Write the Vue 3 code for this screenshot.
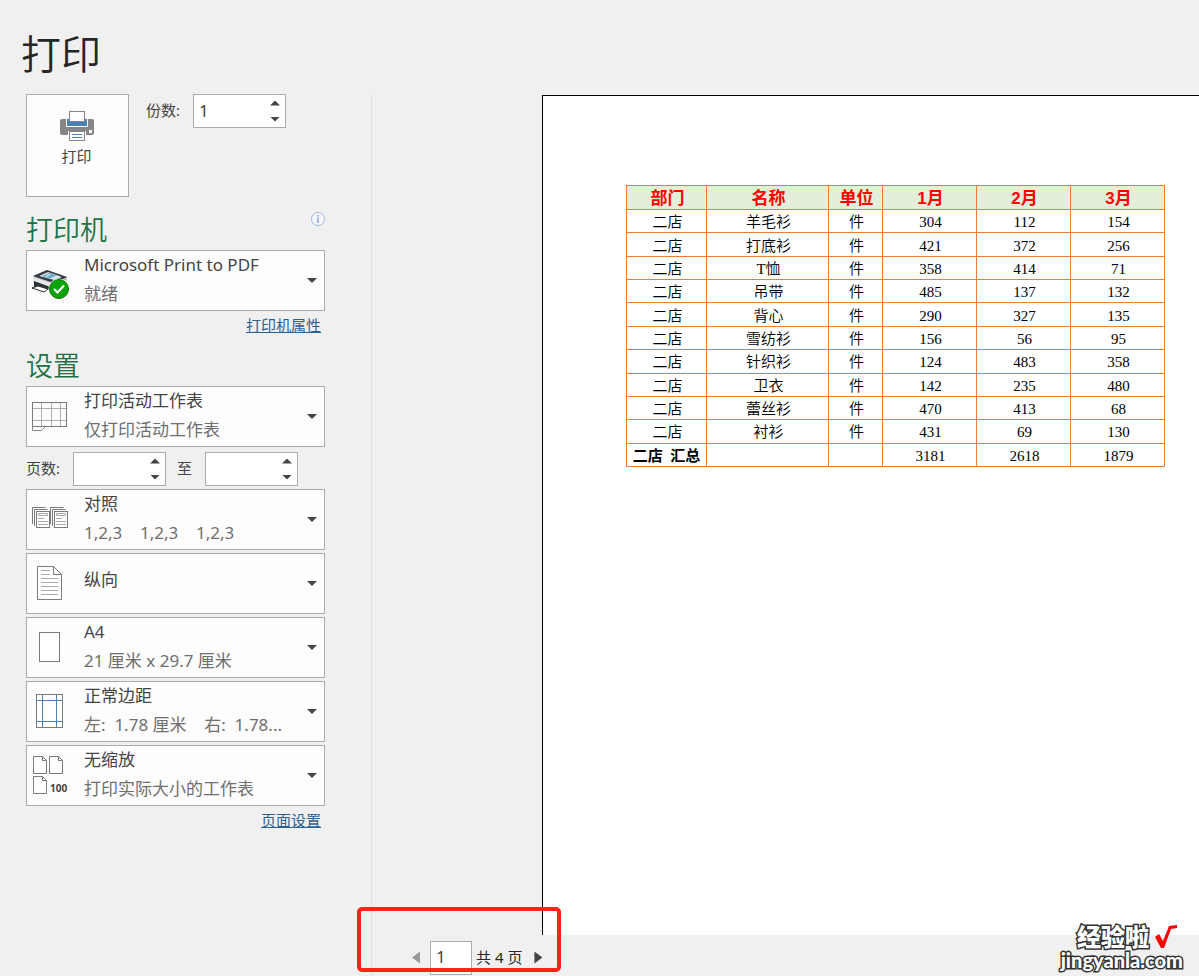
<script setup>
import { ref } from 'vue'

const copies = ref('1')
const fromPage = ref('')
const toPage = ref('')
const page = ref('1')

const step = (field, delta) => {
  field.value = String(Math.max(1, (parseInt(field.value, 10) || 0) + delta))
}
const stepCopies = (d) => step(copies, d)
const stepFrom = (d) => step(fromPage, d)
const stepTo = (d) => step(toPage, d)
const stepPage = (d) => step(page, d)

const settings = [
  { id: 'collate', label: '对照方式', title: '对照', note: '1,2,3    1,2,3    1,2,3' },
  { id: 'orientation', label: '纸张方向', title: '纵向', note: '' },
  { id: 'paper', label: '纸张大小', title: 'A4', note: '21 厘米 x 29.7 厘米' },
  { id: 'margins', label: '页边距', title: '正常边距', note: '左:  1.78 厘米    右:  1.78...' },
  { id: 'scale', label: '缩放', title: '无缩放', note: '打印实际大小的工作表' },
]

const columns = ['部门', '名称', '单位', '1月', '2月', '3月']
const rows = [
  ['二店', '羊毛衫', '件', 304, 112, 154],
  ['二店', '打底衫', '件', 421, 372, 256],
  ['二店', 'T恤', '件', 358, 414, 71],
  ['二店', '吊带', '件', 485, 137, 132],
  ['二店', '背心', '件', 290, 327, 135],
  ['二店', '雪纺衫', '件', 156, 56, 95],
  ['二店', '针织衫', '件', 124, 483, 358],
  ['二店', '卫衣', '件', 142, 235, 480],
  ['二店', '蕾丝衫', '件', 470, 413, 68],
  ['二店', '衬衫', '件', 431, 69, 130],
]
</script>

<template>
  <main class="backstage">
    <h1>打印</h1>
    <div class="content">
      <section class="options">
        <div class="print-row">
          <button class="print-button" type="button">
            <svg width="36" height="32" viewBox="0 0 36 32" aria-hidden="true">
              <rect x="1" y="9" width="34" height="16" rx="2" fill="#868686" />
              <path d="M7 9V17H29V9" fill="#fff" />
              <rect x="8" y="9" width="20" height="7" fill="#4a80b8" />
              <rect x="10.5" y="1.5" width="15" height="10" fill="#fff" stroke="#868686" />
              <rect x="30" y="20" width="3" height="3" fill="#fff" />
              <rect x="9" y="21" width="18" height="10" fill="#fdfdfd" />
              <rect x="10.5" y="21.5" width="15" height="9" fill="#fff" stroke="#868686" />
              <path d="M13 24.5H23M13 27.5H23" stroke="#4a80b8" />
            </svg>
            <span>打印</span>
          </button>
          <label class="caption" for="copies">份数:</label>
          <div class="spinner">
            <input id="copies" v-model="copies" type="text" inputmode="numeric" />
            <div class="steps">
              <button type="button" class="up" aria-label="增加份数" @click="stepCopies(1)"></button>
              <button type="button" class="down" aria-label="减少份数" @click="stepCopies(-1)"></button>
            </div>
          </div>
        </div>

        <div class="heading">
          <h2>打印机</h2>
          <button class="info" type="button" aria-label="打印机状态">
            <svg width="16" height="16" viewBox="0 0 16 16" aria-hidden="true">
              <circle cx="8" cy="8" r="6.5" fill="#f4f7fc" stroke="#9db8dc" />
              <path d="M8 4V5.500M8 6.500V12" stroke="#8fa9d0" stroke-width="1.600" />
            </svg>
          </button>
        </div>

        <div class="picker">
          <select id="printer" aria-label="打印机">
            <option>Microsoft Print to PDF</option>
          </select>
          <svg class="icon" width="46" height="59" viewBox="0 0 46 59" aria-hidden="true">
            <path d="M6 26L20 19L40 26L39 33L24 37L6 31Z" fill="#b8bcc1" />
            <path d="M6 25L20 19L40 26L27 32Z" fill="#33383e" />
            <path d="M12 25L21 21L35 26L27 29Z" fill="#dce4ea" />
            <path d="M15 25L22 22L29 24.500L23 27.500Z" fill="#63a6d4" />
            <path d="M18 25L22 23L24 24L20 26Z" fill="#b7e4c4" />
            <path d="M6 26L27 33V39L6 32Z" fill="#e5e7e9" />
            <path d="M7 30L26 37V40L11 35V38L7 36Z" fill="#2d3034" />
            <path d="M11 35L21 38L17 41L5 37Z" fill="#fff" stroke="#303338" />
            <circle cx="32" cy="38" r="10.500" fill="#fff" />
            <circle cx="32" cy="38" r="9.500" fill="#0ca30a" stroke="#087d08" />
            <path d="M27 38L30.500 41.500L37 34.500" fill="none" stroke="#fff" stroke-width="2.200" />
          </svg>
          <span class="note">就绪</span>
          <span class="caret"></span>
        </div>
        <a class="link" href="#printer">打印机属性</a>

        <div class="heading settings-heading"><h2>设置</h2></div>

        <div class="picker">
          <select id="scope" aria-label="打印范围">
            <option>打印活动工作表</option>
          </select>
          <svg class="icon" width="46" height="59" viewBox="0 0 46 59" fill="none" aria-hidden="true">
            <path d="M14.500 16V39M24.500 16V39M33.500 16V39M6 21.500H39M6 33.500H39" stroke="#b0b0b0" />
            <rect x="5.500" y="15.500" width="34" height="24" stroke="#7b7b7b" />
            <path d="M5.500 39.500V43.500H14.500L18.500 39.500" stroke="#8a8a8a" />
          </svg>
          <span class="note">仅打印活动工作表</span>
          <span class="caret"></span>
        </div>

        <div class="pages-row">
          <label class="caption" for="from">页数:</label>
          <div class="spinner">
            <input id="from" v-model="fromPage" type="text" inputmode="numeric" />
            <div class="steps">
              <button type="button" class="up" aria-label="增加起始页" @click="stepFrom(1)"></button>
              <button type="button" class="down" aria-label="减少起始页" @click="stepFrom(-1)"></button>
            </div>
          </div>
          <label class="caption" for="to">至</label>
          <div class="spinner">
            <input id="to" v-model="toPage" type="text" inputmode="numeric" />
            <div class="steps">
              <button type="button" class="up" aria-label="增加结束页" @click="stepTo(1)"></button>
              <button type="button" class="down" aria-label="减少结束页" @click="stepTo(-1)"></button>
            </div>
          </div>
        </div>

        <div class="stack">
          <div v-for="s in settings" :key="s.id" class="picker" :class="{ single: !s.note }">
            <select :id="s.id" :aria-label="s.label">
              <option>{{ s.title }}</option>
            </select>
            <svg class="icon" width="46" height="59" viewBox="0 0 46 59" fill="none" stroke="#7b7b7b" aria-hidden="true">
              <template v-if="s.id === 'collate'">
                <g v-for="x in [0, 18]" :key="x" :transform="`translate(${x} 0)`">
                  <path d="M5.500 34V17.500H18.500M7.500 36V19.500H20.500" />
                  <rect x="9.500" y="21.500" width="13" height="16" fill="#fff" />
                  <path d="M11.500 23.500H20.500V25.500H11.500ZM11 28.500H17M11 31.500H21M11 34.500H21" stroke="#a8a8a8" />
                </g>
              </template>
              <template v-else-if="s.id === 'orientation'">
                <path d="M10.500 12.500H26.500L34.500 20.500V45.500H10.500ZM26.500 12.500V20.500H34.500" fill="#fff" />
                <path d="M14 16.500H23M14 20.500H23M14 24.500H31M14 28.500H31M14 32.500H31M14 36.500H31M14 40.500H31" stroke="#a8a8a8" />
              </template>
              <rect v-else-if="s.id === 'paper'" x="12.500" y="14.500" width="20" height="29" fill="#fff" />
              <template v-else-if="s.id === 'margins'">
                <rect x="9.500" y="12.500" width="26" height="33" fill="#fff" />
                <path d="M15.500 13V45M29.500 13V45M10 18.500H35M10 39.500H35" stroke="#4a80b8" />
              </template>
              <template v-else>
                <path
                  v-for="p in ['6 10', '22 10', '6 30']"
                  :key="p"
                  :transform="`translate(${p})`"
                  d="M.5 .5H9.500L13.500 4.500V17.500H.5ZM9.500 .5V4.500H13.500"
                  fill="#fff"
                />
                <text class="percent" x="23" y="46">100</text>
              </template>
            </svg>
            <span v-if="s.note" class="note">{{ s.note }}</span>
            <span class="caret"></span>
          </div>
        </div>
        <a class="link" href="#paper">页面设置</a>
      </section>

      <section class="preview">
        <div class="paper">
          <table>
            <colgroup>
              <col class="c-dept" /><col class="c-name" /><col class="c-unit" />
              <col /><col /><col />
            </colgroup>
            <thead>
              <tr><th v-for="c in columns" :key="c">{{ c }}</th></tr>
            </thead>
            <tbody>
              <tr v-for="r in rows" :key="r[1]">
                <td v-for="(v, i) in r" :key="i">{{ v }}</td>
              </tr>
              <tr>
                <td class="total">二店&nbsp; 汇总</td>
                <td></td>
                <td></td>
                <td>3181</td>
                <td>2618</td>
                <td>1879</td>
              </tr>
            </tbody>
          </table>
        </div>
        <nav class="pager" aria-label="预览页">
          <button type="button" class="prev" aria-label="上一页" @click="stepPage(-1)"></button>
          <input id="page" v-model="page" type="text" inputmode="numeric" />
          <label for="page">共 4 页</label>
          <button type="button" class="next" aria-label="下一页" @click="stepPage(1)"></button>
          <span class="highlight"></span>
        </nav>
      </section>
    </div>

    <div class="watermark">
      <div class="brand">
        <span>经验啦</span>
        <svg width="24" height="26" viewBox="0 0 24 26" aria-hidden="true">
          <path d="M1 13L5 10L9 17L15 2L23 1V4L17 5L10 24H7Z" fill="#f00" />
        </svg>
      </div>
      <div class="site">jingyanla.com</div>
    </div>
  </main>
</template>

<style>
body {
  background: #f0f0f0;
}
</style>

<style scoped>
* {
  box-sizing: border-box;
}
.backstage {
  position: relative;
  display: flex;
  flex-direction: column;
  min-height: 100vh;
  overflow: hidden;
  background: #f0f0f0;
  color: #444;
  font-family: 'Noto Sans', 'Noto Sans CJK SC', sans-serif;
  font-size: 15px;
}
button,
input,
select {
  margin: 0;
  padding: 0;
  border: 0;
  background: none;
  color: inherit;
  font: inherit;
}
h1 {
  margin: 0;
  padding: 22px 0 12px 21px;
  color: #262626;
  font-family: 'Noto Sans CJK SC', sans-serif;
  font-size: 40px;
  font-weight: 350;
  line-height: 60px;
}
h2 {
  margin: 0;
  color: #217346;
  font-family: 'Noto Sans CJK SC', sans-serif;
  font-size: 27px;
  font-weight: 350;
  line-height: 38px;
}
.content {
  display: flex;
  flex: 1;
}
.options {
  display: flex;
  flex: none;
  flex-direction: column;
  width: 372px;
  padding: 0 46px 0 26px;
  border-right: 1px solid #e1e1e1;
}
.print-row {
  display: flex;
  align-items: flex-start;
}
.print-row .caption {
  width: 47px;
  margin-left: 17px;
}
.print-button {
  display: flex;
  flex-direction: column;
  align-items: center;
  width: 103px;
  height: 103px;
  padding: 15px 2px 0 0;
  border: 1px solid #ababab;
  background: #fdfdfd;
}
.print-button span {
  margin-top: 4px;
  line-height: 20px;
}
.caption {
  line-height: 32px;
}
.spinner {
  display: flex;
  width: 93px;
  height: 34px;
  border: 1px solid #ababab;
  background: #fff;
}
.spinner input {
  flex: 1;
  min-width: 0;
  padding: 0 0 2px 5px;
  font-size: 17px;
  outline: 0;
}
.steps {
  display: flex;
  flex-direction: column;
  width: 20px;
}
.steps button {
  display: flex;
  flex: 1;
  align-items: center;
  justify-content: center;
}
.up::before,
.down::before,
.caret {
  width: 10px;
  height: 5px;
  background: #444;
  clip-path: polygon(0 0, 100% 0, 50% 100%);
  content: '';
}
.up::before {
  clip-path: polygon(50% 0, 100% 100%, 0 100%);
}
.heading {
  display: flex;
  justify-content: space-between;
  margin: 13px 0 2px;
}
.settings-heading {
  margin-top: 10px;
}
.info {
  width: 16px;
  height: 16px;
  margin: 1px -1px 0 0;
}
.info svg {
  display: block;
}
.picker {
  display: grid;
  grid-template-columns: 57px 1fr 17px;
  height: 61px;
  border: 1px solid #ababab;
  background: #fdfdfd;
}
.picker > * {
  grid-row: 1;
  pointer-events: none;
}
.picker select {
  grid-column: 1 / -1;
  height: 59px;
  padding: 0 24px 32px 57px;
  appearance: none;
  font-size: 17px;
  pointer-events: auto;
}
.picker.single select {
  padding: 3px 24px 11px 57px;
}
.icon {
  grid-column: 1;
}
.note {
  grid-column: 2;
  align-self: end;
  padding-bottom: 4px;
  color: #6f6f6f;
  font-size: 17px;
  line-height: 24px;
  white-space: pre;
}
.caret {
  grid-column: 3;
  align-self: center;
}
.percent {
  fill: #444;
  stroke: none;
  font: bold 10px 'Noto Sans', sans-serif;
}
.link {
  align-self: flex-end;
  margin: 4px 4px 1px 0;
  color: #2b6296;
  line-height: 20px;
}
.pages-row {
  display: flex;
  margin: 5px 0 3px;
}
.pages-row .caption {
  width: 47px;
}
.spinner + .caption {
  width: 39px;
  padding-left: 11px;
}
.stack {
  display: flex;
  flex-direction: column;
  gap: 3px;
}
.preview {
  display: flex;
  flex: 1;
  flex-direction: column;
  min-width: 0;
}
.paper {
  flex: 1;
  margin: 1px 0 0 170px;
  padding: 89px 34px 0 83px;
  border-top: 1px solid #000;
  border-left: 1px solid #000;
  background: #fff;
}
table {
  width: 100%;
  height: 282px;
  border-collapse: collapse;
  table-layout: fixed;
  color: #000;
  font-family: 'Liberation Serif', 'Noto Sans CJK SC', serif;
  font-size: 15px;
  font-weight: 350;
  line-height: 20px;
  text-align: center;
}
.c-dept {
  width: 80px;
}
.c-name {
  width: 122px;
}
.c-unit {
  width: 54px;
}
th,
td {
  height: 23px;
  padding: 2px 0 0 2px;
  border: 1px solid #ed7d31;
  white-space: nowrap;
}
th {
  padding-top: 3px;
  background: #e2efda;
  color: #f00;
  font-family: 'Liberation Sans', 'Noto Sans CJK SC', sans-serif;
  font-size: 17px;
  font-weight: bold;
}
.total {
  padding-left: 0;
  font-weight: bold;
}
.pager {
  position: relative;
  display: flex;
  align-items: center;
  height: 41px;
  padding: 4px 0 0 40px;
  color: #262626;
}
.pager input {
  width: 42px;
  height: 34px;
  margin: 0 4px 0 10px;
  padding: 0 0 2px 5px;
  border: 1px solid #ababab;
  background: #fff;
  color: #444;
  font-size: 17px;
}
.pager label {
  padding-bottom: 2px;
}
.prev,
.next {
  width: 8px;
  height: 12px;
  background: #999;
  clip-path: polygon(0 50%, 100% 0, 100% 100%);
}
.next {
  margin-left: 12px;
  background: #444;
  clip-path: polygon(0 0, 100% 50%, 0 100%);
}
.highlight {
  position: absolute;
  bottom: 4px;
  left: -15px;
  width: 204px;
  height: 65px;
  border: 4px solid #fe2414;
  border-radius: 5px;
  pointer-events: none;
}
.watermark {
  position: absolute;
  right: 16px;
  bottom: 6px;
  color: #fff;
  font-weight: 900;
  -webkit-text-stroke: 3px #333;
  paint-order: stroke fill;
}
.brand {
  display: flex;
  align-items: center;
  justify-content: flex-end;
  gap: 5px;
  padding-right: 5px;
  font-size: 24px;
  font-style: oblique 10deg;
  line-height: 26px;
}
.site {
  font-family: Lato, sans-serif;
  font-size: 20px;
  line-height: 20px;
}
</style>
